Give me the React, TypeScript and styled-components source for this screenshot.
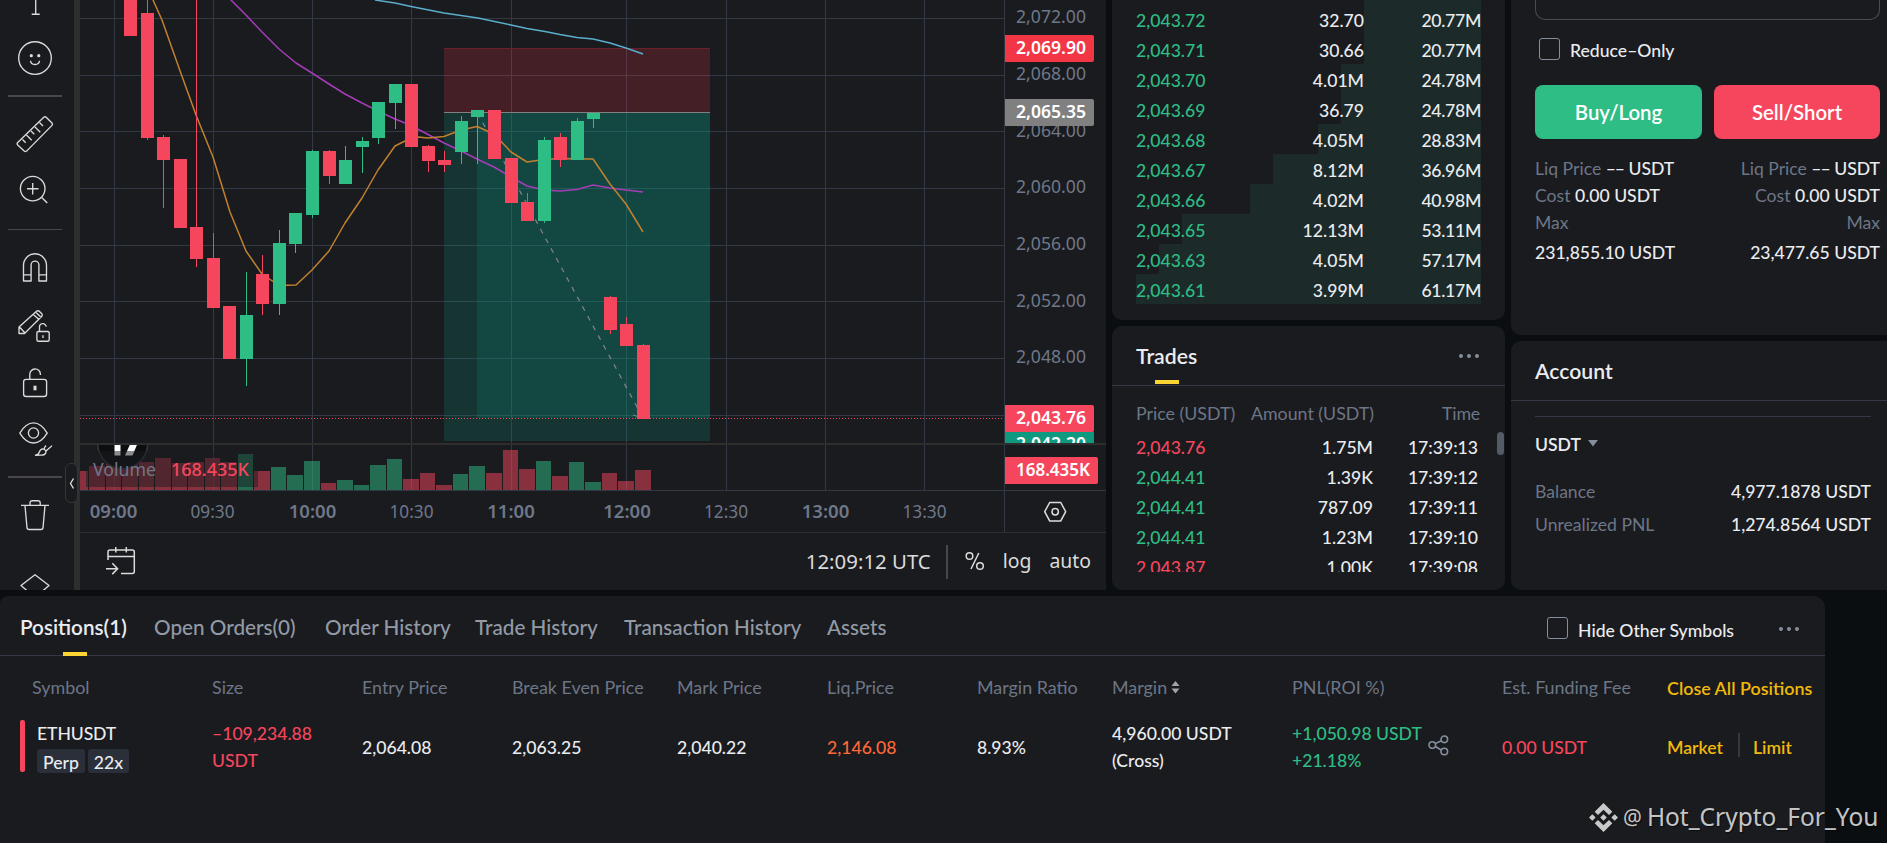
import React from 'react';
import styled, { createGlobalStyle } from 'styled-components';

const c = {
  page: '#0b0e11',
  panel: '#1a1b1f',
  line: '#323944',
  frame: '#2e2e2e',
  text: '#eaecef',
  muted: '#6d7686',
  tab: '#929aa5',
  green: '#2ebd85',
  red: '#f6465d',
  yellow: '#f0b90b',
  accent: '#fcd535',
  icon: '#dbdbdb',
};

const Global = createGlobalStyle`
  * { box-sizing: border-box; }
  body {
    margin: 0;
    background: ${c.page};
    color: ${c.text};
    font-family: Lato, "Liberation Sans", sans-serif;
    font-size: 17.6px;
    font-weight: 500;
    overflow: hidden;
  }
`;

const Screen = styled.div`
  position: relative;
  width: 1887px;
  height: 843px;
  overflow: hidden;
  display: grid;
  grid-template-rows: 590px 247px;
  row-gap: 6px;
`;

const Upper = styled.div`
  display: grid;
  grid-template-columns: 1106px 393px 376px;
  column-gap: 6px;
  min-height: 0;
`;

const Column = styled.div<{ $rows: string }>`
  display: grid;
  grid-template-rows: ${(p) => p.$rows};
  row-gap: 6px;
  min-width: 0;
`;

const Panel = styled.section<{ $radius: string }>`
  background: ${c.panel};
  border-radius: ${(p) => p.$radius};
  overflow: hidden;
`;

/* ---------- chart ---------- */

const ChartPanel = styled.section`
  display: grid;
  grid-template-columns: 80px 1fr;
  background: ${c.panel};
`;

const Toolbar = styled.nav`
  position: relative;
  display: flex;
  flex-direction: column;
  height: 590px;
  overflow: hidden;
  border-right: 6px solid ${c.frame};
`;

const ToolDivider = styled.div<{ $height: number; $thick: number }>`
  height: ${(p) => p.$height}px;
  display: flex;
  align-items: center;
  padding: 0 12px 0 8px;
  flex: none;
  &::after {
    content: '';
    flex: 1;
    height: ${(p) => p.$thick}px;
    background: #4a474c;
  }
`;

const ToolIcon = styled.svg`
  flex: none;
  display: block;
  fill: none;
  stroke: ${c.icon};
  stroke-width: 1.35;
`;

const CollapseTab = styled.button`
  position: absolute;
  left: 65px;
  top: 463px;
  width: 13px;
  height: 40px;
  padding: 0;
  border: 1px solid #36363a;
  border-radius: 6px;
  background: ${c.panel};
  display: flex;
  align-items: center;
  justify-content: center;
`;

const ChartArea = styled.div`
  display: grid;
  grid-template-rows: 533px 57px;
  min-width: 0;
`;

const ChartSvg = styled.svg`
  display: block;
  font-family: "Noto Sans", "Open Sans", sans-serif;
  font-size: 17.6px;
  font-weight: 400;
`;

const ChartFooter = styled.div`
  display: flex;
  align-items: center;
  padding: 0 15px 2px 24px;
  font-family: "Noto Sans", "Open Sans", sans-serif;
  font-size: 20.4px;
  font-weight: 400;
  line-height: 28px;
  color: ${c.icon};
`;

const FooterIcon = styled.svg`
  fill: none;
  stroke: ${c.icon};
  stroke-width: 1.5;
`;

const Clock = styled.span`
  margin-left: auto;
`;

const FooterDivider = styled.i`
  width: 2px;
  height: 34px;
  margin: 2px 17px 0 15px;
  background: #4a474c;
`;

const FooterOption = styled.span<{ $gap: number }>`
  margin-left: ${(p) => p.$gap}px;
  font-size: 19.4px;
`;

/* ---------- order book and trades ---------- */

const Book = styled.div`
  height: 304px;
  padding: 0 24px;
  display: flex;
  flex-direction: column;
  justify-content: flex-end;
  overflow: hidden;
`;

const BookRow = styled.div<{ $start: number }>`
  display: grid;
  grid-template-columns: 120px 108px 1fr;
  flex: none;
  height: 30px;
  padding-top: 2px;
  line-height: 30px;
  text-align: right;
  background: linear-gradient(#1c2a2a, #1c2a2a) no-repeat ${(p) => p.$start}px 0 / 100% 100%;
  span:first-child { text-align: left; color: ${c.green}; }
  span:last-child { letter-spacing: -0.3px; }
`;

const TradesHeader = styled.header`
  position: relative;
  display: flex;
  align-items: center;
  justify-content: space-between;
  height: 60px;
  padding: 0 26px 0 24px;
  border-bottom: 1px solid ${c.line};
`;

const Title = styled.h2`
  margin: 0;
  font-size: 21.2px;
  font-weight: 600;
`;

const Marker = styled.i<{ $left: number; $bottom: number }>`
  position: absolute;
  left: ${(p) => p.$left}px;
  bottom: ${(p) => p.$bottom}px;
  width: 24px;
  height: 4px;
  background: ${c.accent};
`;

const Dots = styled.div`
  display: flex;
  gap: 4px;
  i {
    width: 4px;
    height: 4px;
    border-radius: 50%;
    background: #848e9c;
  }
`;

const TradeHead = styled.div`
  display: grid;
  grid-template-columns: 113px 125px 1fr;
  height: 46px;
  padding: 6px 25px 0 24px;
  font-size: 17.8px;
  font-weight: 400;
  line-height: 42px;
  text-align: right;
  white-space: nowrap;
  color: ${c.muted};
  span:first-child { text-align: left; }
  span:last-child { letter-spacing: -0.2px; }
`;

const TradeScroll = styled.div`
  display: flex;
  justify-content: space-between;
  height: 140px;
  padding: 0 1px 0 24px;
  overflow: hidden;
`;

const TradeList = styled.div`
  width: 342px;
  padding-top: 1px;
`;

const TradeRow = styled.div<{ $up: boolean }>`
  display: grid;
  grid-template-columns: 114px 123px 1fr;
  height: 30px;
  line-height: 30px;
  text-align: right;
  span:first-child { text-align: left; color: ${(p) => (p.$up ? c.green : c.red)}; }
`;

const ScrollThumb = styled.i`
  width: 7px;
  height: 23px;
  border-radius: 4px;
  background: #535b66;
`;

/* ---------- order form and account ---------- */

const Form = styled.div`
  padding: 0 7px 0 24px;
`;

const InputEnd = styled.div`
  height: 20px;
  border: 1px solid #474d57;
  border-top: 0;
  border-radius: 0 0 10px 10px;
`;

const CheckLabel = styled.label<{ $margin: string; $gap: number; $drop: number }>`
  display: flex;
  align-items: flex-start;
  gap: ${(p) => p.$gap}px;
  height: 28px;
  margin: ${(p) => p.$margin};
  white-space: nowrap;
  span { padding-top: ${(p) => p.$drop}px; line-height: 24px; }
`;

const CheckBox = styled.i`
  width: 21px;
  height: 22px;
  margin-top: 3px;
  border: 1px solid #848e9c;
  border-radius: 3px;
`;

const Buttons = styled.div`
  display: grid;
  grid-template-columns: 167px 166px;
  gap: 12px;
  margin-top: 22px;
`;

const TradeButton = styled.button<{ $color: string }>`
  height: 54px;
  padding: 0;
  border: 0;
  border-radius: 8px;
  background: ${(p) => p.$color};
  color: #fff;
  font: 600 20.4px Lato, sans-serif;
`;

const Facts = styled.div`
  display: flex;
  justify-content: space-between;
  margin-top: 16px;
`;

const FactColumn = styled.div<{ $align: string }>`
  text-align: ${(p) => p.$align};
  line-height: 27px;
`;

const Muted = styled.span`
  color: ${c.muted};
  font-weight: 400;
`;

const Dashes = styled.span`
  letter-spacing: -1px;
`;

const FactValue = styled.div`
  margin-top: 3px;
`;

const AccountHeader = styled.header`
  display: flex;
  align-items: center;
  height: 60px;
  padding: 0 24px;
  border-bottom: 1px solid ${c.line};
`;

const AccountBody = styled.div`
  margin: 15px 16px 0 24px;
  border-top: 1px solid ${c.line};
`;

const Asset = styled.div`
  display: flex;
  align-items: center;
  gap: 7px;
  height: 54px;
  margin-bottom: 4px;
  font-weight: 600;
  svg { fill: #848e9c; margin-top: -2px; }
`;

const BalanceRow = styled.div`
  display: flex;
  justify-content: space-between;
  height: 33px;
  line-height: 33px;
`;

/* ---------- positions ---------- */

const PositionsPanel = styled(Panel)`
  width: 1825px;
`;

const Tabs = styled.header`
  position: relative;
  display: flex;
  height: 60px;
  padding-left: 20px;
  border-bottom: 1px solid ${c.line};
`;

const Tab = styled.a<{ $active?: boolean; $width: number }>`
  width: ${(p) => p.$width}px;
  line-height: 62px;
  font-size: 20.7px;
  white-space: nowrap;
  color: ${(p) => (p.$active ? c.text : c.tab)};
  font-weight: ${(p) => (p.$active ? 600 : 500)};
`;

const TabsEnd = styled.div`
  display: flex;
  align-items: center;
  gap: 45px;
  margin-left: auto;
  padding: 7px 26px 0 0;
`;

const columns = '180px 150px 150px 165px 150px 150px 135px 180px 210px 165px 1fr';

const HeadRow = styled.div`
  display: grid;
  grid-template-columns: ${columns};
  height: 64px;
  padding-left: 32px;
  font-size: 17.9px;
  font-weight: 400;
  line-height: 62px;
  white-space: nowrap;
  color: ${c.muted};
`;

const SortIcon = styled.svg`
  margin-left: 4px;
  fill: #a0a4ab;
`;

const Action = styled.a`
  color: ${c.yellow};
  font-weight: 600;
  white-space: nowrap;
`;

const CloseAll = styled(Action)`
  padding-top: 1px;
`;

const PositionRow = styled.div`
  display: grid;
  grid-template-columns: ${columns};
  grid-template-rows: 52px;
  align-items: center;
  height: 52px;
  padding-left: 20px;
  line-height: 27px;
`;

const SymbolCell = styled.div`
  display: flex;
  gap: 12px;
  height: 52px;
  &::before {
    content: '';
    width: 5px;
    border-radius: 2px;
    background: ${c.red};
  }
`;

const SymbolName = styled.div`
  height: 29px;
  line-height: 27px;
  letter-spacing: -0.1px;
`;

const Tags = styled.div`
  display: flex;
  gap: 3px;
`;

const Tag = styled.span<{ $width: number }>`
  width: ${(p) => p.$width}px;
  height: 24px;
  padding-top: 1px;
  line-height: 25px;
  text-align: center;
  border-radius: 3px;
  background: #2a2f3a;
`;

const Cell = styled.div<{ $color?: string }>`
  display: flex;
  align-items: center;
  gap: 6px;
  padding: 2px 0 0 12px;
  color: ${(p) => p.$color ?? c.text};
  white-space: nowrap;
`;

const ShareIcon = styled.svg`
  margin-top: -3px;
  fill: none;
  stroke: #848e9c;
  stroke-width: 1.6;
`;

const Actions = styled(Cell)`
  gap: 12.5px;
  i { width: 2px; height: 24px; margin: -4px 0 0 3px; background: #323944; }
`;

const Watermark = styled.div`
  position: absolute;
  left: 1589px;
  top: 799px;
  display: flex;
  align-items: center;
  gap: 5px;
  height: 36px;
  font: 400 24.5px/36px "Noto Sans", sans-serif;
  color: rgba(230, 230, 230, 0.86);
  text-shadow: 1px 1px 1px rgba(0, 0, 0, 0.6);
  white-space: nowrap;
  small { font-size: 21px; line-height: 34px; }
`;

/* ---------- chart data ---------- */

type Candle = [x: number, top: number, bottom: number, high: number, low: number, up?: 1];
const candles: Candle[] = [
  [124, 0, 36, 0, 36], [141, 13, 138, 0, 140], [157, 137, 160, 135, 208], [174, 159, 228, 159, 228],
  [190, 227, 259, 0, 267], [207, 258, 308, 233, 308], [223, 306, 359, 306, 359], [240, 315, 359, 272, 386, 1],
  [256, 274, 304, 255, 315], [273, 243, 304, 230, 315, 1], [289, 213, 244, 213, 253, 1], [306, 151, 215, 150, 218, 1],
  [323, 151, 176, 150, 184], [339, 160, 184, 146, 184, 1], [356, 141, 147, 137, 173, 1], [372, 102, 138, 102, 144, 1],
  [389, 84, 103, 84, 129, 1], [405, 84, 147, 84, 147], [422, 146, 161, 145, 172], [438, 160, 165, 151, 172],
  [455, 121, 152, 116, 164, 1], [471, 110, 117, 110, 164, 1], [488, 110, 159, 110, 159], [505, 158, 203, 158, 203],
  [521, 202, 221, 193, 221], [538, 140, 221, 137, 223, 1], [554, 137, 160, 133, 167], [571, 121, 160, 118, 160, 1],
  [587, 113, 119, 113, 128, 1], [604, 297, 330, 296, 334], [620, 324, 346, 317, 346], [637, 345, 419, 344, 419],
];

const volumes: [x: number, width: number, top: number, up?: 1][] = [
  [80, 8, 471], [89, 16, 466], [106, 15, 464], [122, 16, 464], [139, 15, 462], [155, 16, 458], [172, 15, 463],
  [188, 16, 462], [205, 15, 458], [221, 16, 462], [238, 15, 454, 1], [254, 16, 471], [271, 15, 467, 1],
  [287, 16, 475, 1], [304, 16, 461, 1], [321, 15, 483], [337, 16, 480, 1], [354, 15, 485, 1], [370, 16, 465, 1],
  [387, 15, 459, 1], [403, 16, 479], [420, 15, 473], [436, 16, 485], [453, 15, 474, 1], [469, 16, 466, 1],
  [486, 16, 473], [503, 15, 450], [519, 16, 469], [536, 15, 461, 1], [552, 16, 476], [569, 15, 462, 1],
  [585, 16, 482, 1], [602, 15, 473], [618, 16, 481], [635, 16, 470],
];

const gridX = [114, 213, 312, 411, 511, 626, 726, 825, 924];
const gridY = [18, 75, 131, 188, 245, 301, 358, 415];
const times: [string, number, boolean][] = [
  ['09:00', 113.5, true], ['09:30', 212.5, false], ['10:00', 312.5, true], ['10:30', 411.5, false], ['11:00', 511, true],
  ['12:00', 627, true], ['12:30', 726, false], ['13:00', 825.5, true], ['13:30', 924.5, false],
];
const prices: [string, number][] = [
  ['2,072.00', 23], ['2,068.00', 80], ['2,064.00', 137], ['2,060.00', 193.3], ['2,056.00', 250], ['2,052.00', 307], ['2,048.00', 363],
];

const orange =
  'M153 0 162 20 179 68 196 115 213 157 230 212 246 251 262 274 279 285.5 296 285 312 270 329 251 345 223 362 198 378 170 395 146 405 141 418 137 428 138 444 136.5 461 130 477 126.5 494 134 511 152 527 162 544 159.5 560 158.5 593 159 610 184 626 204 643 232';
const purple =
  'M230 -1 246 15 262 32 279 49 296 63 312 73 329 84 345 94 362 103 378 111 395 119 410 125 428 134.5 444 143 461 151 477 159 494 167 511 177 527 186 544 190 560 191 577 189.5 593 185 610 188 626 190 643 192';
const blue =
  'M375 0 395 3 411 6.5 444 13 478 18 511 25 527 28.5 545 31.5 560 34.5 577 37.5 593 39 610 43 626 48 643 54';

const PriceTag = ({ y, fill, width = 89, textWidth = 70, children }: { y: number; fill: string; width?: number; textWidth?: number; children: string }) => (
  <g>
    <path d={`M1005 ${y}h${width - 2}q2 0 2 2v23q0 2-2 2h-${width - 2}z`} fill={fill} />
    <text x="1016" y={y + 19.3} fill="#fff" fontWeight="600" textLength={textWidth} lengthAdjust="spacingAndGlyphs">{children}</text>
  </g>
);

const Chart = () => (
  <ChartSvg width="1026" height="533" viewBox="80 0 1026 533">
    <defs>
      <clipPath id="main"><rect x="80" y="0" width="1026" height="443" /></clipPath>
      <clipPath id="vol"><rect x="80" y="445" width="924" height="46" /></clipPath>
    </defs>
    <g fill={c.line} shapeRendering="crispEdges">
      {gridX.map((x) => <rect key={x} x={x} y="0" width="1" height="490" />)}
      {gridY.map((y) => <rect key={y} x="80" y={y} width="924" height="1" />)}
      <rect x="1004" y="0" width="1" height="532" />
    </g>
    <g shapeRendering="crispEdges">
      <rect x="444" y="48" width="266" height="64" fill="rgba(242,54,69,.2)" />
      <rect x="444" y="48" width="266" height="1" fill="#6e1f2c" />
      <rect x="444" y="113" width="266" height="328" fill="rgba(8,153,129,.2)" />
      <rect x="477" y="113" width="233" height="305" fill="rgba(8,153,129,.2)" />
      <rect x="444" y="112" width="266" height="1" fill="#808080" />
      <path d="M80 418.5H1004" stroke={c.red} strokeDasharray="1 2" />
    </g>
    <g fill="none" strokeWidth="1.5" strokeLinejoin="round">
      <path d={blue} stroke="#5aadcb" />
      <path d={purple} stroke="#a53cb8" />
      <path d={orange} stroke="#c0812f" />
    </g>
    <path d="M477.5 113 643 418" stroke="#85838a" strokeWidth="1.2" strokeDasharray="5 6" />
    <path d="M633 415l6 2" stroke="#85838a" />
    <g shapeRendering="crispEdges">
      {candles.map(([x, top, bottom, high, low, up]) => (
        <g key={x} fill={up ? c.green : c.red}>
          <rect x={x + 6} y={high} width="1" height={low - high} />
          <rect x={x} y={top} width="13" height={bottom - top} />
        </g>
      ))}
    </g>
    <g clipPath="url(#main)">
      <g fill="#6f7889">
        {prices.map(([label, y]) => <text key={label} x="1016" y={y} textLength="70">{label}</text>)}
      </g>
      <PriceTag y={35} fill="#f23645">2,069.90</PriceTag>
      <PriceTag y={99} fill="#808080">2,065.35</PriceTag>
      <PriceTag y={431} fill="#0f9981">2,042.20</PriceTag>
      <PriceTag y={405} fill={c.red}>2,043.76</PriceTag>
    </g>
    <rect x="80" y="443" width="1026" height="2" fill={c.frame} />
    <g shapeRendering="crispEdges">
      {volumes.map(([x, w, top, up]) => (
        <rect key={x} x={x} y={top} width={w} height={490 - top} fill={up ? c.green : c.red} fillOpacity=".5" />
      ))}
    </g>
    <g clipPath="url(#vol)">
      <circle cx="122.7" cy="443.5" r="25" fill="#0d0e10" stroke="#37373a" strokeWidth="1.5" />
      <path d="M114.5 440h6v15.500h-6zM132 440h7l-6.500 15.500h-7.500z" fill="#fff" />
    </g>
    <rect x="86" y="451" width="172" height="36" fill={c.panel} fillOpacity=".5" />
    <text x="93" y="476" fontSize="18" fill="#6f7889" textLength="63" lengthAdjust="spacingAndGlyphs">Volume</text>
    <text x="171" y="476" fontSize="18" fontWeight="500" fill={c.red} textLength="78" lengthAdjust="spacingAndGlyphs">168.435K</text>
    <PriceTag y={457} fill={c.red} width={93} textWidth={74}>168.435K</PriceTag>
    <rect x="80" y="490" width="1026" height="1" fill={c.line} />
    <g fill="#6f7889" textAnchor="middle">
      {times.map(([label, x, bold]) => (
        <text key={label} x={x} y="517.5" fontWeight={bold ? 600 : 400} textLength={bold ? 47.5 : 44} lengthAdjust="spacingAndGlyphs">{label}</text>
      ))}
    </g>
    <g fill="none" stroke={c.icon} strokeWidth="1.5">
      <path d="M1044.700 511.700l5-9.200h11l5 9.200-5 9.200h-11z" />
      <circle cx="1055.200" cy="511.700" r="3.200" />
    </g>
    <rect x="80" y="532" width="1026" height="1" fill={c.frame} />
  </ChartSvg>
);

const Tool = ({ y, h, children }: { y: number; h: number; children: React.ReactNode }) => (
  <ToolIcon width="74" height={h} viewBox={`0 ${y} 74 ${h}`} strokeLinejoin="round">{children}</ToolIcon>
);

const Tools = () => (
  <Toolbar>
    <Tool y={0} h={30}><path d="M35.700 0V14M31.700 14.200h8" /></Tool>
    <Tool y={30} h={56}>
      <circle cx="35" cy="58" r="16.300" />
      <path d="M30.500 60.800q.3 3.700 4.500 3.700t4.500-3.700" />
      <g fill={c.icon} stroke="none"><circle cx="31.300" cy="55.700" r="1.600" /><circle cx="38.800" cy="55.700" r="1.600" /></g>
    </Tool>
    <ToolDivider $height={20} $thick={2} />
    <Tool y={106} h={56}>
      <path d="M17.700 142.500 43.800 117.200q1.200-1 2.400 0l5.800 5.800q1 1.200 0 2.400L26.600 151.100q-1.200 1-2.400 0l-6.500-6.200q-1.200-1.200 0-2.400z" />
      <path d="M22.500 139.500l3.200 3.200M26.500 135l5.200 5.200M31 131l3.300 3.300M35 127l5.300 5.300M39.500 122.500l3.500 3.500" />
    </Tool>
    <Tool y={162} h={54}>
      <circle cx="32.700" cy="188.600" r="12.300" />
      <path d="M32.700 183v11.500M27 188.700h11.500M41.700 197.500l5.600 5.500" />
    </Tool>
    <ToolDivider $height={27} $thick={1} />
    <Tool y={243} h={50}>
      <path d="M23.500 281V265.300a11.500 11.500 0 0 1 23 0V281h-7.600v-16a3.900 3.900 0 0 0-7.800 0v16zM23.500 274.800h7.600M38.900 274.800h7.600" />
    </Tool>
    <Tool y={293} h={60}>
      <path d="M19 333.500v-6.500l17.500-15.800q1.500-1 3 .2l2.300 2.300q1 1.300 0 2.600L24.500 333.500zM19.500 327l5.500 6M33 314.300l6.300 5.500M35.500 312l5.800 5.500" />
      <rect x="36.900" y="331.500" width="12.300" height="9.700" rx="1.500" />
      <path d="M39.500 331v-3.500a3.400 3.400 0 0 1 6.800-.8M43 335.200v2.800" />
    </Tool>
    <Tool y={353} h={62}>
      <rect x="23.600" y="379.300" width="23" height="17.200" rx="2.500" />
      <path d="M29.800 379v-4.500a5.300 5.300 0 0 1 10.600-.5v1" />
      <path d="M35 385.700v4.600" strokeWidth="3" />
    </Tool>
    <Tool y={415} h={54}>
      <path d="M19.800 433.200q6-10.300 13.700-10.300t13.700 10.300q-6 9.800-13.700 9.800t-13.700-9.800z" />
      <circle cx="33.500" cy="433" r="5.100" />
      <path d="M35.500 455.200q3.500-.8 3.800-3.200 1-3 3.600-3.200 3.300.5 3 3.600-1 2.800-4.600 2.800zM43.800 449.300l1.200-2.500M46 451l3.700-3.200q2-1.600 2-2.300M45 446.800l1-1.300" />
    </Tool>
    <ToolDivider $height={16} $thick={2} />
    <Tool y={485} h={60}>
      <path d="M21 505.300h28M30 505v-2.300q.2-2 2.300-2h5.600q2.200 0 2.300 2v2.300M25 505.500l2 22.500q.3 1.500 2 1.500h12q1.700 0 2-1.500l2-22.500" />
    </Tool>
    <Tool y={545} h={45}><path d="M35 574.800l14 10.700-14 12-14-12z" /></Tool>
  </Toolbar>
);

/* ---------- panels ---------- */

const book: [string, string, string, number][] = [
  ['2,043.72', '32.70', '20.77M', 228], ['2,043.71', '30.66', '20.77M', 228], ['2,043.70', '4.01M', '24.78M', 205],
  ['2,043.69', '36.79', '24.78M', 205], ['2,043.68', '4.05M', '28.83M', 182], ['2,043.67', '8.12M', '36.96M', 137],
  ['2,043.66', '4.02M', '40.98M', 114], ['2,043.65', '12.13M', '53.11M', 46], ['2,043.63', '4.05M', '57.17M', 23],
  ['2,043.61', '3.99M', '61.17M', 0],
];

const trades: [string, string, string, boolean][] = [
  ['2,043.76', '1.75M', '17:39:13', false], ['2,044.41', '1.39K', '17:39:12', true], ['2,044.41', '787.09', '17:39:11', true],
  ['2,044.41', '1.23M', '17:39:10', true], ['2,043.87', '1.00K', '17:39:08', false],
];

const tabs: [string, number][] = [
  ['Positions(1)', 134], ['Open Orders(0)', 171], ['Order History', 150], ['Trade History', 149], ['Transaction History', 203], ['Assets', 90],
];

const ThreeDots = () => <Dots><i /><i /><i /></Dots>;

const Estimate = ({ align, max }: { align: string; max: string }) => (
  <FactColumn $align={align}>
    <div><Muted>Liq Price</Muted> <Dashes>––</Dashes> USDT</div>
    <div><Muted>Cost</Muted> 0.00 USDT</div>
    <Muted>Max</Muted>
    <FactValue>{max}</FactValue>
  </FactColumn>
);

export default function App() {
  return (
    <Screen>
      <Global />
      <Upper>
        <ChartPanel>
          <Tools />
          <ChartArea>
            <Chart />
            <ChartFooter>
              <FooterIcon width="34" height="30" viewBox="104 546 34 30">
                <path d="M108 560V552q0-2 2-2h22.300q2 0 2 2v19.500q0 2-2 2H121M108 556.500h26M115.800 547v5.500M126.300 547v5.500M106 568.700h11.500M112.300 563.300l5.300 5.400-5.300 5.400" />
              </FooterIcon>
              <Clock>12:09:12 UTC</Clock>
              <FooterDivider />
              <FooterIcon width="20" height="20" viewBox="0 0 20 20">
                <circle cx="4.500" cy="5" r="3.300" /><circle cx="15" cy="15" r="3.300" /><path d="M13.800 2 6 18" />
              </FooterIcon>
              <FooterOption $gap={18}>log</FooterOption>
              <FooterOption $gap={18}>auto</FooterOption>
            </ChartFooter>
          </ChartArea>
        </ChartPanel>

        <Column $rows="320px 264px">
          <Panel $radius="0 0 10px 10px">
            <Book>
              <BookRow $start={228} />
              {book.map(([price, size, total, start]) => (
                <BookRow key={price} $start={start}><span>{price}</span><span>{size}</span><span>{total}</span></BookRow>
              ))}
            </Book>
          </Panel>
          <Panel $radius="10px">
            <TradesHeader>
              <Title>Trades</Title>
              <Marker $left={43} $bottom={1} />
              <ThreeDots />
            </TradesHeader>
            <TradeHead><span>Price (USDT)</span><span>Amount (USDT)</span><span>Time</span></TradeHead>
            <TradeScroll>
              <TradeList>
                {trades.map(([price, amount, time, up]) => (
                  <TradeRow key={time} $up={up}><span>{price}</span><span>{amount}</span><span>{time}</span></TradeRow>
                ))}
              </TradeList>
              <ScrollThumb />
            </TradeScroll>
          </Panel>
        </Column>

        <Column $rows="335px 249px">
          <Panel $radius="0 0 0 10px">
            <Form>
              <InputEnd />
              <CheckLabel $margin="15px 0 0 4px" $gap={10} $drop={4}><CheckBox /><span>Reduce–Only</span></CheckLabel>
              <Buttons>
                <TradeButton $color={c.green}>Buy/Long</TradeButton>
                <TradeButton $color={c.red}>Sell/Short</TradeButton>
              </Buttons>
              <Facts>
                <Estimate align="left" max="231,855.10 USDT" />
                <Estimate align="right" max="23,477.65 USDT" />
              </Facts>
            </Form>
          </Panel>
          <Panel $radius="10px 0 0 10px">
            <AccountHeader><Title>Account</Title></AccountHeader>
            <AccountBody>
              <Asset>USDT <svg width="10" height="7"><path d="M0 0h10L5 6.500z" /></svg></Asset>
              <BalanceRow><Muted>Balance</Muted><span>4,977.1878 USDT</span></BalanceRow>
              <BalanceRow><Muted>Unrealized PNL</Muted><span>1,274.8564 USDT</span></BalanceRow>
            </AccountBody>
          </Panel>
        </Column>
      </Upper>

      <PositionsPanel $radius="8px 12px 0 0">
        <Tabs>
          {tabs.map(([label, width], i) => <Tab key={label} $active={i === 0} $width={width}>{label}</Tab>)}
          <Marker $left={63} $bottom={-1} />
          <TabsEnd>
            <CheckLabel $margin="-2px 0 0" $gap={10} $drop={5}><CheckBox /><span>Hide Other Symbols</span></CheckLabel>
            <ThreeDots />
          </TabsEnd>
        </Tabs>
        <HeadRow>
          <span>Symbol</span><span>Size</span><span>Entry Price</span><span>Break Even Price</span><span>Mark Price</span>
          <span>Liq.Price</span><span>Margin Ratio</span>
          <span>Margin<SortIcon width="9" height="13" viewBox="0 0 9 13"><path d="M4.500 0 8.500 5H.5zM4.500 12.500.5 7.500h8z" /></SortIcon></span>
          <span>PNL(ROI %)</span><span>Est. Funding Fee</span><CloseAll>Close All Positions</CloseAll>
        </HeadRow>
        <PositionRow>
          <SymbolCell>
            <div>
              <SymbolName>ETHUSDT</SymbolName>
              <Tags><Tag $width={48}>Perp</Tag><Tag $width={41}>22x</Tag></Tags>
            </div>
          </SymbolCell>
          <Cell $color={c.red}><div>–109,234.88<br />USDT</div></Cell>
          <Cell>2,064.08</Cell>
          <Cell>2,063.25</Cell>
          <Cell>2,040.22</Cell>
          <Cell $color="#ff6838">2,146.08</Cell>
          <Cell>8.93%</Cell>
          <Cell><div>4,960.00 USDT<br />(Cross)</div></Cell>
          <Cell $color={c.green}>
            <div>+1,050.98 USDT<br />+21.18%</div>
            <ShareIcon width="21" height="21" viewBox="0 0 21 21">
              <circle cx="4.300" cy="10" r="3.300" /><circle cx="16.300" cy="4.300" r="3.300" /><circle cx="16.300" cy="16.500" r="3.300" />
              <path d="M7.300 8.600l6-2.900M7.300 11.500l6 3.500" />
            </ShareIcon>
          </Cell>
          <Cell $color={c.red}>0.00 USDT</Cell>
          <Actions><Action>Market</Action><i /><Action>Limit</Action></Actions>
        </PositionRow>
      </PositionsPanel>

      <CollapseTab aria-label="Collapse toolbar">
        <svg width="6" height="11" fill="none" stroke={c.icon} strokeWidth="1.400"><path d="M4.500 .5 1.500 5.500l3 5" /></svg>
      </CollapseTab>

      <Watermark>
        <svg width="29" height="29" viewBox="0 0 28 28" fill="currentColor">
          <path d="M14 0l8.500 8.500-3.200 3.200L14 6.400l-5.300 5.300-3.200-3.200zM14 28l8.500-8.500-3.200-3.200-5.300 5.300-5.300-5.300-3.200 3.200zM14 10.800l3.200 3.200-3.200 3.200-3.200-3.200zM3.200 10.800 6.400 14l-3.200 3.200L0 14zM24.800 10.800 28 14l-3.200 3.200-3.200-3.200z" />
        </svg>
        <small>@</small>
        <span>Hot_Crypto_For_You</span>
      </Watermark>
    </Screen>
  );
}
